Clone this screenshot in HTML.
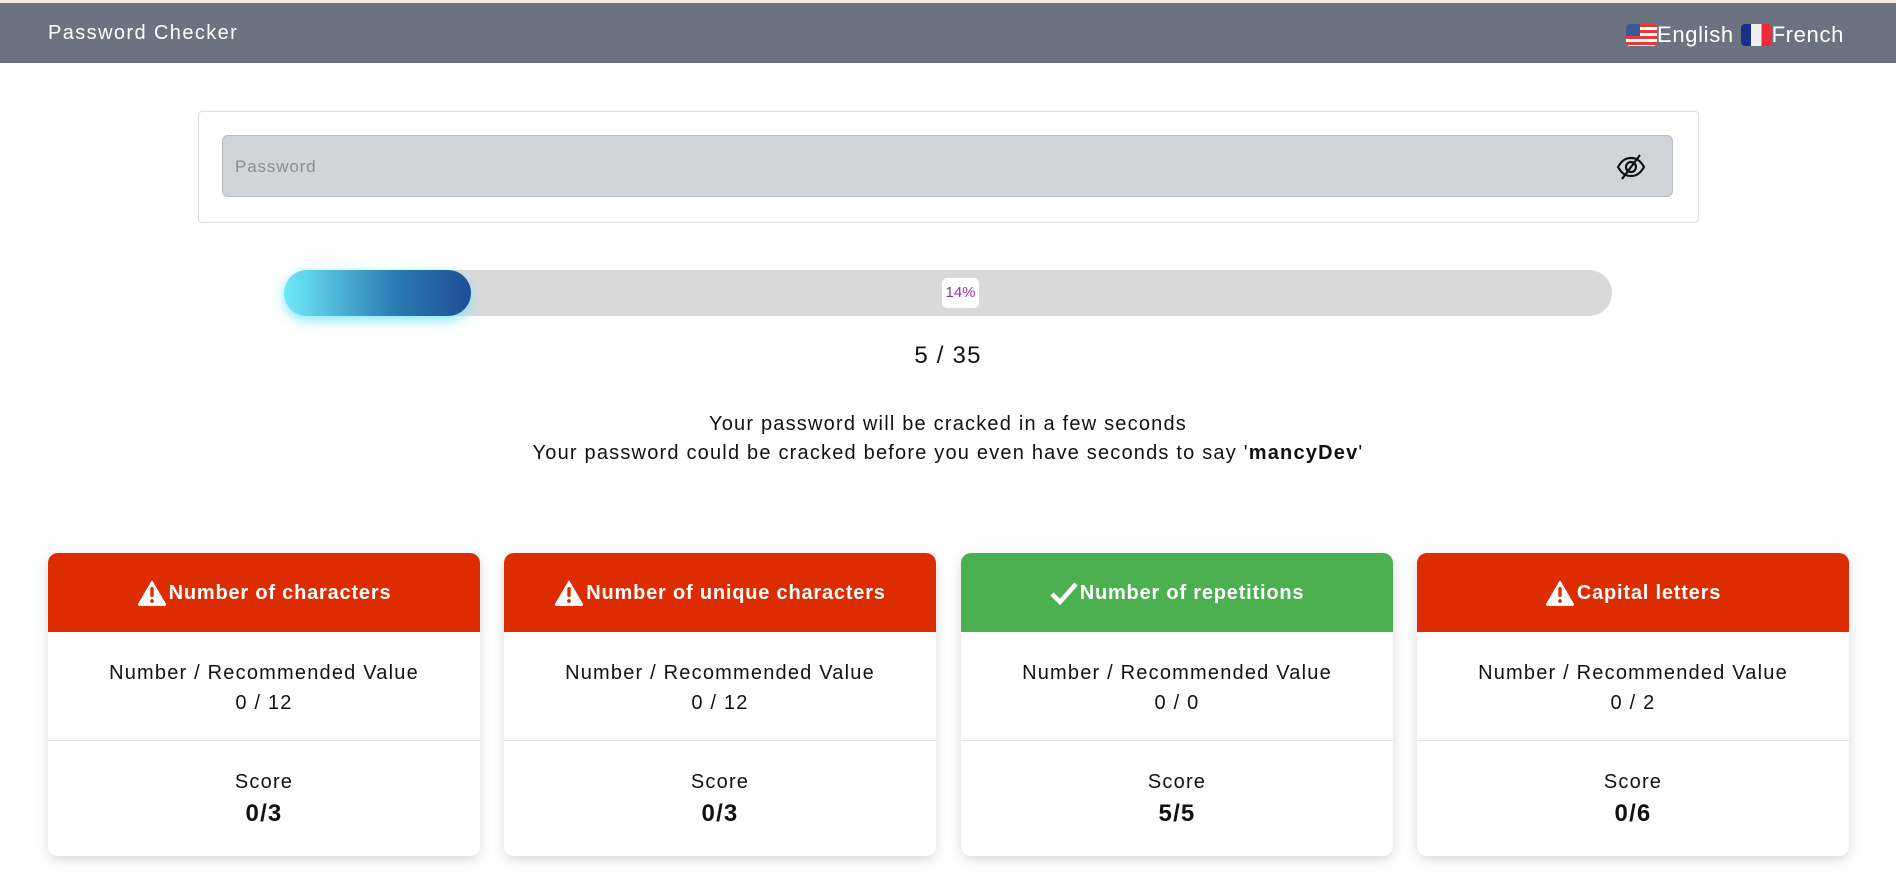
<!DOCTYPE html>
<html><head><meta charset="utf-8"><style>
*{box-sizing:border-box;margin:0;padding:0}
body{width:1896px;height:873px;background:#fff;font-family:"Liberation Sans",sans-serif;position:relative;overflow:hidden;color:#111;letter-spacing:0.075em}
.top{position:absolute;left:0;top:0;width:1896px;height:3px;background:#f7e6dc}
.nav{position:absolute;left:0;top:3px;width:1896px;height:60px;background:#6c7380;color:#fff}
.nav .t{position:absolute;left:48px;top:19px;font-size:20px;letter-spacing:0.07em}
.lang{position:absolute;left:1626px;top:19px;font-size:22px;display:flex;align-items:center;letter-spacing:0.03em}
.flag{width:31px;height:22px;border-radius:4px;overflow:hidden;display:inline-block}
.box{position:absolute;left:198px;top:111px;width:1501px;height:112px;border:1px solid #ddd;border-radius:4px}
.inp{position:absolute;left:222px;top:135px;width:1451px;height:62px;background:#d1d5db;border:1px solid #b9bdc4;border-radius:6px}
.inp span{position:absolute;left:12px;top:21px;font-size:17px;color:#8a8d93;letter-spacing:0.05em}
.bar{position:absolute;left:284px;top:270px;width:1328px;height:46px;background:#d9d9d9;border-radius:23px}
.fill{position:absolute;left:284px;top:270px;width:187px;height:46px;border-radius:23px;background:linear-gradient(90deg,#6eeaf8,#2b7ab4 60%,#1d4f94);box-shadow:0 4px 12px #7fe7fb}
.pct{position:absolute;left:942px;top:278px;width:37px;height:30px;background:#fff;border-radius:5px;font-size:15px;color:#9b2fb0;text-align:center;line-height:30px;letter-spacing:0}
.c{position:absolute;left:0;width:1896px;text-align:center}
.card{position:absolute;top:553px;width:432px;height:303px;border-radius:10px;background:#fff;box-shadow:0 4px 12px rgba(0,0,0,.15);overflow:hidden;text-align:center}
.hd{height:79px;color:#fff;font-weight:bold;font-size:20px;line-height:80px;display:flex;justify-content:center;align-items:center;gap:2px;letter-spacing:0.04em}
.hd svg{flex:none}
.r{background:#dd2c00}.g{background:#4caf50}
.m{height:109px;border-bottom:1px solid #e5e5e5;font-size:20px;padding-top:26px;line-height:30px}
.s{font-size:20px;padding-top:25px;line-height:32px}
.s b{font-size:24px}
</style></head><body>
<div class="top"></div>
<div class="nav"><div class="t">Password Checker</div>
<div class="lang"><span class="flag" style="background:repeating-linear-gradient(#e53935 0 3px,#fff 3px 6px)"><span style="display:block;width:14px;height:12px;background:#3d5a98"></span></span>English&nbsp;<span class="flag" style="background:linear-gradient(90deg,#1a2e8c 33%,#eee 33% 66%,#ef2b3a 66%)"></span>French</div></div>
<div class="box"></div>
<div class="inp"><span>Password</span>
<svg style="position:absolute;left:1393px;top:18px" width="30" height="26" viewBox="0 0 30 26" fill="none" stroke="#111" stroke-width="2.2"><path d="M2 13C6 6 10 4 15 4s9 2 13 9c-4 7-8 9-13 9S6 20 2 13z"/><circle cx="15" cy="13" r="5"/><path d="M24 1L6 25"/></svg></div>
<div class="bar"></div><div class="fill"></div><div class="pct">14%</div>
<div class="c" style="top:342px;font-size:24px">5 / 35</div>
<div class="c" style="top:413px;font-size:20px">Your password will be cracked in a few seconds</div>
<div class="c" style="top:442px;font-size:20px">Your password could be cracked before you even have seconds to say '<b>mancyDev</b>'</div>
<div class="card" style="left:48px"><div class="hd r"><svg width="30" height="27" viewBox="0 0 30 27"><path d="M15 1L29 25a1.5 1.5 0 0 1-1.3 2H2.3A1.5 1.5 0 0 1 1 25z" fill="#fff"/><rect x="13.3" y="8" width="3.4" height="10" rx="1.5" fill="#dd2c00"/><circle cx="15" cy="22" r="1.9" fill="#dd2c00"/></svg>Number of characters</div><div class="m">Number / Recommended Value<br>0 / 12</div><div class="s">Score<br><b>0/3</b></div></div>
<div class="card" style="left:504px"><div class="hd r"><svg width="30" height="27" viewBox="0 0 30 27"><path d="M15 1L29 25a1.5 1.5 0 0 1-1.3 2H2.3A1.5 1.5 0 0 1 1 25z" fill="#fff"/><rect x="13.3" y="8" width="3.4" height="10" rx="1.5" fill="#dd2c00"/><circle cx="15" cy="22" r="1.9" fill="#dd2c00"/></svg>Number of unique characters</div><div class="m">Number / Recommended Value<br>0 / 12</div><div class="s">Score<br><b>0/3</b></div></div>
<div class="card" style="left:961px"><div class="hd g"><svg width="28" height="24" viewBox="0 0 28 24"><path d="M2 13l8 8L26 3" fill="none" stroke="#fff" stroke-width="4.5"/></svg>Number of repetitions</div><div class="m">Number / Recommended Value<br>0 / 0</div><div class="s">Score<br><b>5/5</b></div></div>
<div class="card" style="left:1417px"><div class="hd r"><svg width="30" height="27" viewBox="0 0 30 27"><path d="M15 1L29 25a1.5 1.5 0 0 1-1.3 2H2.3A1.5 1.5 0 0 1 1 25z" fill="#fff"/><rect x="13.3" y="8" width="3.4" height="10" rx="1.5" fill="#dd2c00"/><circle cx="15" cy="22" r="1.9" fill="#dd2c00"/></svg>Capital letters</div><div class="m">Number / Recommended Value<br>0 / 2</div><div class="s">Score<br><b>0/6</b></div></div>
</body></html>
